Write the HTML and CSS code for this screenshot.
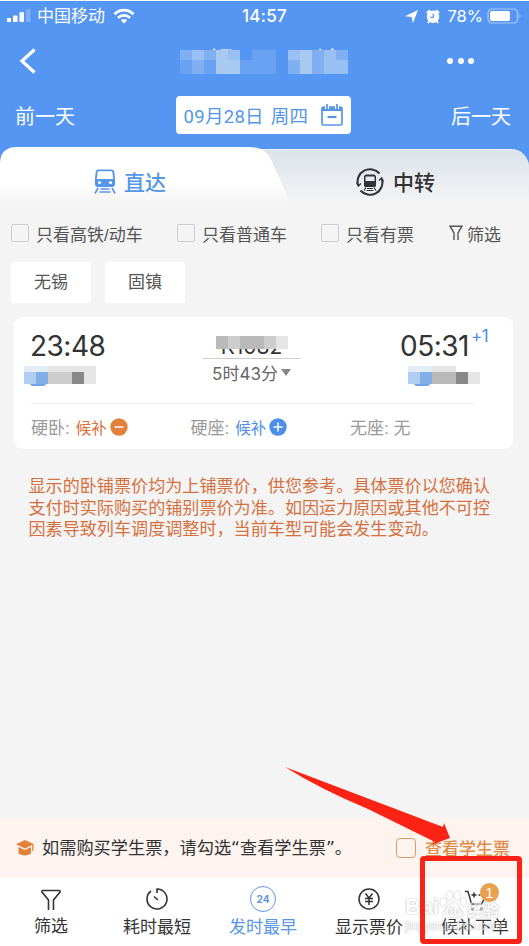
FILE: index.html
```html
<!DOCTYPE html>
<html lang="zh-CN">
<head>
    <meta charset="UTF-8">
    <meta name="viewport" content="width=device-width, initial-scale=1.0">
    <title>车票查询</title>
    <link rel="stylesheet" href="styles.css">
</head>
<body>
    <div class="app">
        <header class="header">
            <div class="status-bar">
                <div class="status-left">
                    <svg class="signal" width="24" height="14" viewBox="0 0 24 14" fill="#fff">
                        <rect x="0" y="9" width="4" height="4" rx="1"/>
                        <rect x="6" y="6.500" width="4.500" height="6.500" rx="1"/>
                        <rect x="12.500" y="3" width="4.500" height="10" rx="1"/>
                        <rect x="19" y="0" width="4.500" height="13" rx="1" opacity="0.25"/>
                    </svg>
                    <span class="carrier">中国移动</span>
                    <svg class="wifi" width="22" height="16" viewBox="0 0 22 16" fill="none" stroke="#fff" stroke-width="2.700">
                        <path d="M1.500 6.200C7 .8 15 .8 20.500 6.200"/>
                        <path d="M5 9.800C8.500 6.500 13.500 6.500 17 9.800"/>
                        <path d="M11 15.500L7.800 12.300Q11 9.700 14.200 12.300Z" fill="#fff" stroke="none"/>
                    </svg>
                </div>
                <div class="clock">14:57</div>
                <div class="status-right">
                    <svg width="13" height="13" viewBox="0 0 13 13" fill="#fff"><path d="M13 0L8 13L6.500 7L0 6.200Z"/></svg>
                    <svg class="alarm" width="14" height="15" viewBox="0 0 14 15">
                        <circle cx="7" cy="7.800" r="6.200" fill="#fff"/>
                        <path d="M.8 4L4 1.200M13.200 4L10 1.200M3 12.500L1.800 14M11 12.500L12.200 14" stroke="#fff" stroke-width="2"/>
                        <path d="M7.300 4.500V8.300H4.300" fill="none" stroke="#5596f3" stroke-width="1.200"/>
                    </svg>
                    <span class="percent">78%</span>
                    <svg width="35" height="16" viewBox="0 0 35 16">
                        <rect x="1" y="1" width="29.500" height="14" rx="4" fill="none" stroke="#a9caf9" stroke-width="1.200"/>
                        <rect x="3" y="3" width="20" height="10" rx="2" fill="#fff"/>
                        <path d="M32.500 5.500Q34.500 8 32.500 10.500Z" fill="#a9caf9"/>
                    </svg>
                </div>
            </div>

            <div class="nav-bar">
                <svg class="back" width="18" height="26" viewBox="0 0 18 26" fill="none" stroke="#fff" stroke-width="3.200"><path d="M16.500 1.500L4 13L16.500 24.500"/></svg>
                <div class="title">
                    <span>无锡</span><span>固镇</span>
                    <div class="mosaic title-mosaic">
                        <i class="b2"></i><i class="b3"></i><i class="b2"></i><i class="b4"></i><i class="b3"></i><i></i><i class="b1"></i><i class="b1"></i><i></i><i class="b3"></i><i class="b4"></i><i class="b2"></i><i class="b3"></i><i class="b2"></i>
                        <i class="b1"></i><i class="b2"></i><i class="b1"></i><i class="b4"></i><i class="b4"></i><i class="b1"></i><i class="b1"></i><i class="b1"></i><i></i><i class="b2"></i><i class="b4"></i><i class="b2"></i><i class="b3"></i><i class="b3"></i>
                    </div>
                </div>
                <div class="more"><i></i><i></i><i></i></div>
            </div>

            <div class="date-bar">
                <span>前一天</span>
                <div class="date-box">
                    <span>09月28日 周四</span>
                    <svg width="22" height="22" viewBox="0 0 22 22" fill="none" stroke="#5596e6" stroke-width="1.700">
                        <rect x="1" y="3" width="20" height="18" rx="1.500"/>
                        <path d="M1 5H21" stroke-width="4"/>
                        <path d="M6 0V5M16 0V5" stroke="#fff" stroke-width="4"/>
                        <path d="M6 0V5M16 0V5"/>
                        <path d="M6.500 13H15.500" stroke-width="2.200"/>
                    </svg>
                </div>
                <span>后一天</span>
            </div>
        </header>

        <div class="tabs">
            <div class="tab-bg"></div>
            <svg class="tab-shape" width="300" height="57" viewBox="0 0 300 57">
                <defs>
                    <linearGradient id="fade" x1="0" y1="0" x2="0" y2="1">
                        <stop offset="0.600" stop-color="#fff"/>
                        <stop offset="1" stop-color="#f4f4f4"/>
                    </linearGradient>
                </defs>
                <path d="M0 57V17Q0 0 17 0H248C262 0 268 5 273 17L291 57Z" fill="url(#fade)"/>
            </svg>
            <div class="tab active">
                <svg width="22" height="25" viewBox="0 0 22 25">
                    <path fill="#5596e6" fill-rule="evenodd" d="M4 .5H18Q20 .5 20.300 3L21 10V15Q21 18 18 18H4Q1 18 1 15V10L1.700 3Q2 .5 4 .5ZM3.800 2.300L2.800 10H19.200L18.200 2.300ZM4 12.500V14.700H7V12.500ZM15 12.500V14.700H18V12.500Z"/>
                    <path d="M4 19L1 24.500M18 19L21 24.500M6.500 20H15.500M5.500 23H16.500" stroke="#5596e6" stroke-width="1.600"/>
                </svg>
                <span>直达</span>
            </div>
            <div class="tab transfer">
                <svg width="28" height="28" viewBox="0 0 28 28" fill="none" stroke="#2e3236">
                    <path d="M2 17A12.500 12.500 0 0 1 23.500 5.500M26 11A12.500 12.500 0 0 1 4.500 22.500" stroke-width="2"/>
                    <path d="M.8 14.500L2.300 18L5 15.500M27.200 13.500L25.700 10L23 12.500" stroke-width="1.400"/>
                    <path fill="#2e3236" stroke="none" fill-rule="evenodd" d="M9.500 6.500H18.500L20 8V17.500Q20 19 18.500 19H9.500Q8 19 8 17.500V8ZM9.500 8.500V13H18.500V8.500Z"/>
                    <path d="M10 19.500L8 22.500M18 19.500L20 22.500M11 20.500H17M10.500 22.500H17.500" stroke-width="1.200"/>
                </svg>
                <span>中转</span>
            </div>
        </div>

        <main class="content">
            <div class="filters">
                <label class="check c1"><i></i>只看高铁/动车</label>
                <label class="check c2"><i></i>只看普通车</label>
                <label class="check c3"><i></i>只看有票</label>
                <div class="filter-link">
                    <svg width="14" height="16" viewBox="0 0 14 16" fill="none" stroke="#555" stroke-width="1.400"><path d="M5 15V8L1 1.200H13L9 8V15"/></svg>
                    <span>筛选</span>
                </div>
            </div>

            <div class="chips">
                <div class="chip">无锡</div>
                <div class="chip">固镇</div>
            </div>

            <section class="card">
                <div class="trip">
                    <div class="depart">
                        <div class="time">23:48</div>
                        <div class="station">
                            <span class="badge"></span><b>无锡</b>
                            <div class="mosaic station-mosaic">
                                <i class="s1"></i><i class="s1"></i><i class="g1"></i><i class="g1"></i><i class="g1"></i><i class="g1"></i>
                                <i class="s2"></i><i class="s3"></i><i class="g2"></i><i class="g2"></i><i class="g4"></i><i class="g1"></i>
                            </div>
                        </div>
                    </div>
                    <div class="train">
                        <div class="train-no">
                            K1082
                            <div class="mosaic train-mosaic"><i class="g3"></i><i class="g2"></i><i class="g3"></i><i class="g3"></i><i class="g2"></i><i class="g1"></i></div>
                        </div>
                        <div class="duration">5时43分<i class="caret"></i></div>
                    </div>
                    <div class="arrive">
                        <div class="time">05:31<sup>+1</sup></div>
                        <div class="station">
                            <span class="badge"></span><b>固镇</b>
                            <div class="mosaic station-mosaic">
                                <i class="s1"></i><i class="s1"></i><i class="g1"></i><i class="g1"></i><i class="g0"></i><i class="g0"></i>
                                <i class="s2"></i><i class="s3"></i><i class="g3"></i><i class="g3"></i><i class="g4"></i><i class="g1"></i>
                            </div>
                        </div>
                    </div>
                </div>
                <div class="seats">
                    <div class="seat">硬卧: <em class="orange">候补</em>
                        <svg width="18" height="18" viewBox="0 0 18 18"><circle cx="9" cy="9" r="8.700" fill="#e2813b"/><path d="M4.500 9H13.500" stroke="#fff" stroke-width="1.500"/></svg>
                    </div>
                    <div class="seat">硬座: <em class="blue">候补</em>
                        <svg width="18" height="18" viewBox="0 0 18 18"><circle cx="9" cy="9" r="8.700" fill="#4d8ee6"/><path d="M4.500 9H13.500M9 4.500V13.500" stroke="#fff" stroke-width="1.500"/></svg>
                    </div>
                    <div class="seat">无座: 无</div>
                </div>
            </section>

            <p class="notice">显示的卧铺票价均为上铺票价，供您参考。具体票价以您确认<br>支付时实际购买的铺别票价为准。如因运力原因或其他不可控<br>因素导致列车调度调整时，当前车型可能会发生变动。</p>
        </main>

        <div class="student-bar">
            <svg width="18" height="16" viewBox="0 0 18 16" fill="#e2813b">
                <path d="M9 0L18 4.300L9 8.600L0 4.300Z"/>
                <path d="M2.500 7L9 10L15 7V13.500Q9 17.500 2.500 13.500Z"/>
                <path d="M16.200 4.500H17.500V11H16.200Z"/>
            </svg>
            <span class="student-text">如需购买学生票，请勾选“查看学生票”。</span>
            <label class="student-check"><i></i>查看学生票</label>
        </div>

        <nav class="bottom-nav">
            <div class="item first">
                <svg width="22" height="24" viewBox="0 0 22 24" fill="none" stroke="#333" stroke-width="1.600"><path d="M8.500 23V13L2 5Q1.500 3.500 3 3.500H19Q20.500 3.500 20 5L13.500 13V23"/></svg>
                <span>筛选</span>
            </div>
            <div class="item">
                <svg width="24" height="24" viewBox="0 0 24 24" fill="none" stroke="#333" stroke-width="1.600"><path d="M12 6V2A10 10 0 1 1 6 4"/><path d="M9 9.500L13 13"/></svg>
                <span>耗时最短</span>
            </div>
            <div class="item current">
                <div class="clock24">24</div>
                <span>发时最早</span>
            </div>
            <div class="item">
                <svg width="24" height="24" viewBox="0 0 24 24" fill="none" stroke="#333" stroke-width="1.500"><circle cx="12" cy="12" r="10"/><path d="M8.500 6.500L12 11L15.500 6.500M12 11V18M8 11.500H16M8 14.500H16"/></svg>
                <span>显示票价</span>
            </div>
            <div class="item">
                <svg width="24" height="24" viewBox="0 0 24 24" fill="none" stroke="#333" stroke-width="1.500"><path d="M2 4.500H5L8.500 17H18.500L21.500 11M8.500 8H13.500M11 5.500V10.500M15.500 8H17.500"/><path d="M8 22H10.500M17 22H19.500" stroke-width="2.500"/></svg>
                <span>候补下单</span>
                <b class="count">1</b>
            </div>
        </nav>

        <!-- annotation layer -->
        <div class="watermark">
            <div class="wm-main">Bai<div class="paw"><svg width="28" height="30" viewBox="0 0 29 30" fill="#fff" fill-opacity="0.700" stroke="#c4c4c4" stroke-width="0.900">
                <ellipse cx="4.500" cy="12" rx="3.500" ry="4.500"/><ellipse cx="11" cy="5.500" rx="3.500" ry="4.800"/><ellipse cx="19" cy="5.500" rx="3.500" ry="4.800"/><ellipse cx="25" cy="12" rx="3.200" ry="4.500"/>
                <path d="M14.500 12C19 12 20 17 24 21C27 25 24 29 20 28.500C16 27.500 13 27.500 9 28.500C4 29 2 25 5 21C9 17 10 12 14.500 12Z"/>
            </svg><span class="wm-du">du</span></div><span class="wm-cn">经验</span></div>
            <div class="wm-url">jingyan.baidu.com</div>
        </div>
        <svg class="arrow" width="170" height="82" viewBox="0 0 170 82"><path d="M0 0L158 60L159 56L165 71L146 78L150 75L83 42Q35 22 0 0Z" fill="#fb2313"/></svg>
        <div class="red-box"></div>
    </div>
</body>
</html>
```
FILE: styles.css
```css
* {
    box-sizing: border-box;
}

body {
    margin: 0;
    font-family: "Liberation Sans", "Noto Sans CJK SC", sans-serif;
    font-size: 17px;
    color: #333;
    background: #f4f4f4;
}

i, em {
    font-style: normal;
}

svg {
    display: block;
    flex: none;
}

.app {
    position: relative;
    display: flex;
    flex-direction: column;
    width: 529px;
    height: 946px;
    overflow: hidden;
}

/* Header */
.header {
    height: 147px;
    background: #5596f3;
    border-top: 1px solid #f3f8fe;
    color: #fff;
}

.status-bar {
    display: grid;
    grid-template-columns: 1fr auto 1fr;
    align-items: center;
    height: 30px;
    padding: 0 7px 0 7px;
}

.status-left, .status-right {
    display: flex;
    align-items: center;
}

.carrier {
    margin: 0 8px 0 6px;
    padding-top: 2px;
    line-height: 20px;
}

.clock {
    font-family: Inter, sans-serif;
    font-size: 17px;
    font-weight: 500;
    letter-spacing: 0.3px;
}

.status-right {
    justify-content: flex-end;
}

.alarm {
    margin: 0 7px 0 8px;
}

.percent {
    margin-right: 4px;
    font-family: Inter, sans-serif;
    font-size: 16.500px;
}

.nav-bar {
    display: flex;
    align-items: center;
    height: 59px;
    padding: 0 55px 0 18px;
}

.title {
    position: relative;
    display: flex;
    justify-content: space-between;
    width: 168px;
    height: 27px;
    margin-left: 144px;
    padding: 0 8px 0 4px;
    font-size: 25px;
    line-height: 28px;
}

.mosaic {
    position: absolute;
    display: grid;
}

.mosaic i {
    background: #5596f3;
}

.title-mosaic {
    left: 0;
    top: 3px;
    width: 168px;
    height: 24px;
    grid-template-columns: repeat(14, 12px);
    grid-template-rows: 10px 14px;
}

.mosaic .b1 { background: #69a2f3; }
.mosaic .b2 { background: #80b0f1; }
.mosaic .b3 { background: #98c0f2; }
.mosaic .b4 { background: #a8caf1; }
.mosaic .g0 { background: #fff; }
.mosaic .g1 { background: #e5e5e5; }
.mosaic .g2 { background: #cdcdcd; }
.mosaic .g3 { background: #b9b9b9; }
.mosaic .g4 { background: #888; }
.mosaic .s1 { background: #e2edf7; }
.mosaic .s2 { background: #b0cef1; }
.mosaic .s3 { background: #80aee6; }

.more {
    display: flex;
    gap: 4.500px;
    margin-left: auto;
}

.more i {
    width: 6px;
    height: 6px;
    border-radius: 50%;
    background: #fff;
}

.date-bar {
    display: flex;
    align-items: center;
    justify-content: space-between;
    height: 50px;
    padding: 0 18px 0 15px;
    font-size: 20px;
}

.date-box {
    display: flex;
    align-items: center;
    justify-content: space-between;
    width: 175px;
    height: 38px;
    padding: 0 8px;
    border-radius: 4px;
    background: #fff;
    color: #5596e6;
    font-family: Roboto, "Noto Sans CJK SC", sans-serif;
    font-size: 18.500px;
    letter-spacing: 0.300px;
    word-spacing: 2px;
    white-space: nowrap;
}

/* Tabs */
.tabs {
    position: relative;
    display: flex;
    height: 57px;
    background: linear-gradient(#5596f3 50%, #f4f4f4 50%);
}

.tab-bg {
    position: absolute;
    left: 200px;
    right: 0;
    top: 2px;
    bottom: 0;
    border-top: 1px solid #e8f3fc;
    border-radius: 0 18px 0 0;
    background: linear-gradient(#dde3eb, #f4f4f4);
}

.tab-shape {
    position: absolute;
    left: 0;
    top: 0;
}

.tab {
    position: relative;
    display: flex;
    align-items: center;
    gap: 8px;
    width: 264px;
    height: 69px;
    padding-left: 94px;
    font-size: 21px;
    font-weight: 500;
}

.tab span {
    margin-top: -2px;
}

.active {
    color: #5596e6;
}

.transfer {
    gap: 9px;
    padding-left: 92px;
}

/* Filters */
.content {
    flex: 1;
}

.filters {
    display: flex;
    align-items: center;
    height: 58px;
    padding-left: 11px;
    color: #555;
}

.check {
    display: flex;
    align-items: center;
}

.check i {
    width: 18px;
    height: 18px;
    margin-right: 7px;
    border: 1px solid #ccc;
    border-radius: 2px;
}

.c1 { width: 166px; }
.c2 { width: 144px; }
.c3 { width: 128px; }

.filter-link {
    display: flex;
    align-items: center;
    gap: 4px;
}

.chips {
    display: flex;
    gap: 14px;
    padding-left: 11px;
}

.chip {
    width: 80px;
    height: 41px;
    border-radius: 3px;
    background: #fff;
    color: #555;
    line-height: 42px;
    text-align: center;
}

/* Train card */
.card {
    width: 499px;
    height: 132px;
    margin: 14px 0 0 14px;
    padding: 0 17px;
    border-radius: 9px;
    background: #fff;
}

.trip {
    display: grid;
    grid-template-columns: 172px 198px 1fr;
    height: 86px;
}

.time {
    height: 49px;
    margin-left: -1px;
    font-family: Inter, sans-serif;
    font-size: 28px;
    line-height: 58px;
    letter-spacing: -0.500px;
    white-space: nowrap;
}

.time sup {
    position: relative;
    top: -14px;
    margin-left: 2px;
    color: #4d8ee6;
    font-size: 17px;
    line-height: 0;
    vertical-align: baseline;
}

.station {
    position: relative;
    display: flex;
    align-items: center;
    gap: 5px;
    width: 72px;
    height: 20px;
    margin-left: -7px;
    padding-left: 6px;
    font-size: 17px;
    line-height: 16px;
}

.station b {
    margin-top: 1px;
}

.arrive .station {
    margin-left: 7px;
}

.badge {
    align-self: flex-end;
    width: 16px;
    height: 16px;
    border-radius: 3px;
    background: #6ca3eb;
}

.station-mosaic {
    left: 0;
    top: 0;
    width: 72px;
    grid-template-columns: repeat(6, 12px);
    grid-template-rows: 6px 12px;
}

.train {
    display: flex;
    flex-direction: column;
    width: 97px;
    padding-top: 19px;
}

.train-no {
    position: relative;
    height: 23px;
    border-bottom: 1px solid #ccc;
    font-family: Inter, sans-serif;
    font-size: 21px;
    line-height: 22px;
    text-align: center;
}

.train-mosaic {
    left: 13px;
    top: 0;
    width: 72px;
    grid-template-columns: repeat(6, 12px);
    grid-template-rows: 13px;
}

.duration {
    display: flex;
    align-items: center;
    justify-content: center;
    gap: 3px;
    height: 26px;
    color: #666;
    font-family: Inter, "Noto Sans CJK SC", sans-serif;
    font-size: 17px;
}

.caret {
    border: 5.500px solid transparent;
    border-top: 7px solid #888;
    border-bottom: 0;
}

.seats {
    display: grid;
    grid-template-columns: 159.500px 159.500px auto;
    width: 443px;
    height: 46px;
    border-top: 1px solid #eee;
    color: #999;
}

.seat {
    display: flex;
    align-items: center;
}

.seat em {
    margin: 0 3px 0 6px;
    font-size: 15.500px;
}

.orange { color: #d9703a; }
.blue { color: #4d8ee6; }

.notice {
    margin: 27px 0 0 28.500px;
    color: #d4713f;
    font-size: 17.100px;
    line-height: 21.500px;
    white-space: nowrap;
}

/* Bottom */
.student-bar {
    display: flex;
    align-items: center;
    height: 61px;
    padding: 0 19px 0 16px;
    background: #fdf4ef;
}

.student-text {
    margin-left: 8px;
    font-family: "DejaVu Sans", "Noto Sans CJK SC", sans-serif;
    font-size: 17.200px;
    line-height: 20px;
    white-space: nowrap;
}

.student-check {
    display: flex;
    align-items: center;
    margin-left: auto;
    color: #de8e4b;
    font-weight: 500;
}

.student-check i {
    width: 20px;
    height: 20px;
    margin-right: 9px;
    border: 1.500px solid #de9b63;
    border-radius: 4px;
}

.bottom-nav {
    display: flex;
    width: 530px;
    height: 68px;
    margin-left: -2px;
    background: #fff;
    box-shadow: 2px 0 #fff;
}

.item {
    position: relative;
    display: flex;
    flex-direction: column;
    align-items: center;
    width: 106px;
    padding-top: 9px;
}

.item span {
    margin-top: 5px;
    line-height: 24px;
}

.item.first span {
    margin-top: 4px;
}

.current {
    color: #5596e6;
}

.clock24 {
    width: 26px;
    height: 26px;
    margin: -1px 0;
    border: 1.500px solid #6694e2;
    border-radius: 50%;
    color: #6694e2;
    font-family: Inter, sans-serif;
    font-size: 10px;
    font-weight: 700;
    line-height: 24px;
    text-align: center;
}

.count {
    position: absolute;
    z-index: 2;
    left: 58px;
    top: 5px;
    width: 19px;
    height: 19px;
    border-radius: 50%;
    background: #e9a04f;
    color: #fff;
    font-size: 15px;
    font-weight: 400;
    line-height: 19px;
    text-align: center;
}

/* Overlays */
.watermark {
    position: absolute;
    left: 405px;
    top: 888px;
    color: #fff;
    opacity: 0.6;
    text-shadow: 0 0 1px #888, 0 0 2px #aaa;
}

.wm-main {
    display: flex;
    align-items: flex-end;
    height: 32px;
    font-size: 22px;
    font-weight: 700;
    line-height: 26px;
}

.paw {
    position: relative;
}

.wm-du {
    position: absolute;
    left: 6px;
    bottom: 2px;
    font-size: 13px;
    line-height: 15px;
}

.wm-cn {
    font-size: 16px;
    line-height: 18px;
}

.wm-url {
    margin-top: -1px;
    font-size: 12px;
    line-height: 15px;
}

.arrow {
    position: absolute;
    left: 285px;
    top: 767px;
}

.red-box {
    position: absolute;
    left: 420px;
    top: 856px;
    width: 102px;
    height: 88px;
    border: 5px solid #fb2217;
    border-radius: 4px;
}
```
